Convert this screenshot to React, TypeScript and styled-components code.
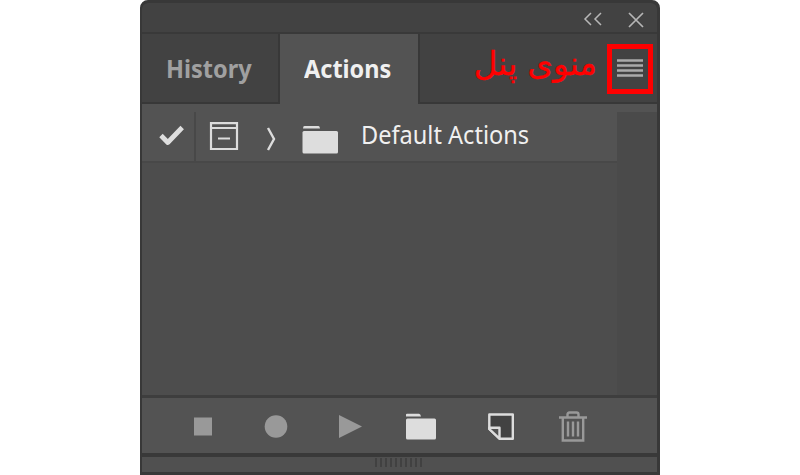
import React from 'react';
import styled, { createGlobalStyle } from 'styled-components';

const GlobalStyle = createGlobalStyle`
  * { box-sizing: border-box; }
  body { margin: 0; background: #fff; overflow: hidden; }
  svg { display: block; flex: none; }
`;

const Page = styled.main`
  display: flex;
  justify-content: center;
  width: 800px;
  height: 475px;
  background: #fff;
`;

const Panel = styled.section`
  display: flex;
  flex-direction: column;
  width: 520px;
  height: 475px;
  border: solid #383838;
  border-width: 3px 3px 3px 2px;
  border-radius: 8px 8px 0 0;
  background: #383838;
  overflow: hidden;
`;

const TitleBar = styled.header`
  display: flex;
  justify-content: flex-end;
  flex: none;
  height: 31px;
  padding: 8px 12px 0 0;
  gap: 24px;
  border-bottom: 2px solid #393939;
  border-radius: 6px 6px 0 0;
  background: #424242;
`;

const TabBar = styled.nav`
  display: flex;
  flex: none;
  height: 70px;
  background: #424242;
`;

const Tab = styled.button<{ $active?: boolean }>`
  width: 138px;
  padding: 1px 0 1px 24px;
  border: 0;
  border-right: ${p => (p.$active ? 0 : 2)}px solid #383838;
  border-bottom: ${p => (p.$active ? 0 : 2)}px solid #383838;
  background: ${p => (p.$active ? '#535353' : '#424242')};
  color: ${p => (p.$active ? '#f0f0f0' : '#a0a0a0')};
  font: 700 25px/66px 'Noto Sans', sans-serif;
  text-align: left;
  white-space: nowrap;
`;

const TabLabel = styled.span<{ $active?: boolean }>`
  display: block;
  height: ${p => (p.$active ? 68 : 66)}px;
  transform: scaleX(0.94);
  transform-origin: left;
`;

const TabRest = styled.div`
  display: flex;
  flex: 1;
  justify-content: flex-end;
  border-left: 2px solid #383838;
  border-bottom: 2px solid #383838;
`;

const MenuNote = styled.span`
  margin: 5px 10px 0 0;
  color: #f00;
  font: 32.5px/50px 'DejaVu Sans', sans-serif;
  -webkit-text-stroke: 0.4px #f00;
  white-space: nowrap;
`;

const MenuButton = styled.button`
  display: flex;
  align-items: flex-start;
  width: 46px;
  height: 50px;
  margin: 10px 4px 0 0;
  padding: 10px 0 0 5px;
  border: 5px solid #f00;
  background: #424242;
`;

const Content = styled.div`
  display: grid;
  grid-template-columns: 475px 1fr;
  flex: none;
  height: 291px;
  background: #4d4d4d;
`;

const ScrollTrack = styled.div`
  border-top: 8px solid #535353;
  background: #4a4a4a;
`;

const ActionRow = styled.div`
  display: flex;
  height: 59px;
  border-bottom: 2px solid #484848;
  background: #535353;
`;

const CheckCell = styled.div`
  width: 54px;
  height: 49px;
  margin-top: 8px;
  padding: 13px 0 0 17px;
  border-right: 2px solid #484848;
`;

const RowIcons = styled.div`
  display: flex;
  gap: 25.5px;
  padding: 18px 22px 0 13px;
`;

const ActionName = styled.span`
  color: #f0f0f0;
  font: 26px/60px 'Noto Sans', sans-serif;
  transform: scaleX(0.906);
  transform-origin: left;
  white-space: nowrap;
`;

const Toolbar = styled.footer`
  display: grid;
  grid-template-columns: 73px 74px 71px 80px 72px 32px;
  flex: none;
  height: 58px;
  padding: 12px 0 0 45px;
  border-top: 3px solid #3e3e3e;
  background: #535353;
`;

const GripBar = styled.div`
  display: flex;
  justify-content: center;
  flex: none;
  height: 19px;
  padding-top: 1px;
  border-top: 4px solid #393939;
  background: #505050;
`;

const Grip = styled.div`
  width: 47px;
  height: 9px;
  margin-right: 2px;
  background: repeating-linear-gradient(90deg, #414141 0 2px, transparent 2px 5px);
`;

function FolderIcon({ wide = false }: { wide?: boolean }) {
  return wide ? (
    <svg width="37" height="34" fill="#ddd">
      <path d="M2.5 4h14q1 0 1.5 2.4H1Q1 4 2.5 4Z" />
      <rect x=".5" y="9" width="35.5" height="22.5" rx="1.5" />
    </svg>
  ) : (
    <svg width="32" height="32" fill="#ddd">
      <path d="M2 3.7h12q1.5 0 2 2.8H1v-2q0-.8 1-.8Z" />
      <rect x="1" y="8.5" width="30" height="21" rx="1.5" />
    </svg>
  );
}

export default function App() {
  return (
    <>
      <GlobalStyle />
      <Page>
        <Panel>
          <TitleBar>
            <svg width="20" height="18" fill="none" stroke="#b7b7b7" strokeWidth="1.5">
              <path d="M8 2 2 8l6 6M18 2l-6 6 6 6" />
            </svg>
            <svg width="18" height="18" fill="none" stroke="#b5b5b5" strokeWidth="1.7">
              <path d="m2 2 14 14M16 2 2 16" />
            </svg>
          </TitleBar>
          <TabBar>
            <Tab><TabLabel>History</TabLabel></Tab>
            <Tab $active><TabLabel $active>Actions</TabLabel></Tab>
            <TabRest>
              <MenuNote dir="rtl" lang="fa">منوی پنل</MenuNote>
              <MenuButton aria-label="Panel menu">
                <svg width="26" height="20" stroke="#aaa" strokeWidth="2.3">
                  <path d="M0 1.5h26M0 6.5h26M0 11.5h26M0 16.5h26" />
                </svg>
              </MenuButton>
            </TabRest>
          </TabBar>
          <Content>
            <div>
              <ActionRow>
                <CheckCell>
                  <svg width="27" height="24" fill="none" stroke="#dedede" strokeWidth="4.8" strokeLinejoin="round">
                    <path d="m2 10.5 6.8 7L23.2 2.5" />
                  </svg>
                </CheckCell>
                <RowIcons>
                  <svg width="30" height="30" fill="none" stroke="#dcdcdc" strokeWidth="2.2">
                    <path d="M2 1.2h26V27H2zM2 6h26M9 16.5h12" />
                  </svg>
                  <svg width="12" height="30" fill="none" stroke="#dcdcdc" strokeWidth="2.4">
                    <path d="m3 6 6 11-6 11" />
                  </svg>
                  <FolderIcon wide />
                </RowIcons>
                <ActionName>Default Actions</ActionName>
              </ActionRow>
            </div>
            <ScrollTrack />
          </Content>
          <Toolbar>
            <svg width="32" height="32" fill="#999"><rect x="7" y="7.5" width="18" height="18" /></svg>
            <svg width="32" height="32" fill="#999"><circle cx="16" cy="16.5" r="11.3" /></svg>
            <svg width="32" height="32" fill="#999"><path d="M5 5v23l23-11.5Z" /></svg>
            <FolderIcon />
            <svg width="32" height="32" stroke="#ddd" strokeWidth="2.4" strokeLinejoin="round">
              <path d="M4.3 4.5h23.5V28.7H14.5L4.3 19Z" fill="#424242" />
              <path d="M4.3 17.8h10.2v10.9L4.3 19Z" fill="#535353" />
            </svg>
            <svg width="32" height="34" fill="none" stroke="#999" strokeWidth="2.4">
              <path d="M2 7.5h28M5.8 8v22.5h20.4V8M10.5 7V4.5q0-2 2-2h7q2 0 2 2V7M11 11.5v15M16 11.5v15M21 11.5v15" />
            </svg>
          </Toolbar>
          <GripBar><Grip /></GripBar>
        </Panel>
      </Page>
    </>
  );
}
